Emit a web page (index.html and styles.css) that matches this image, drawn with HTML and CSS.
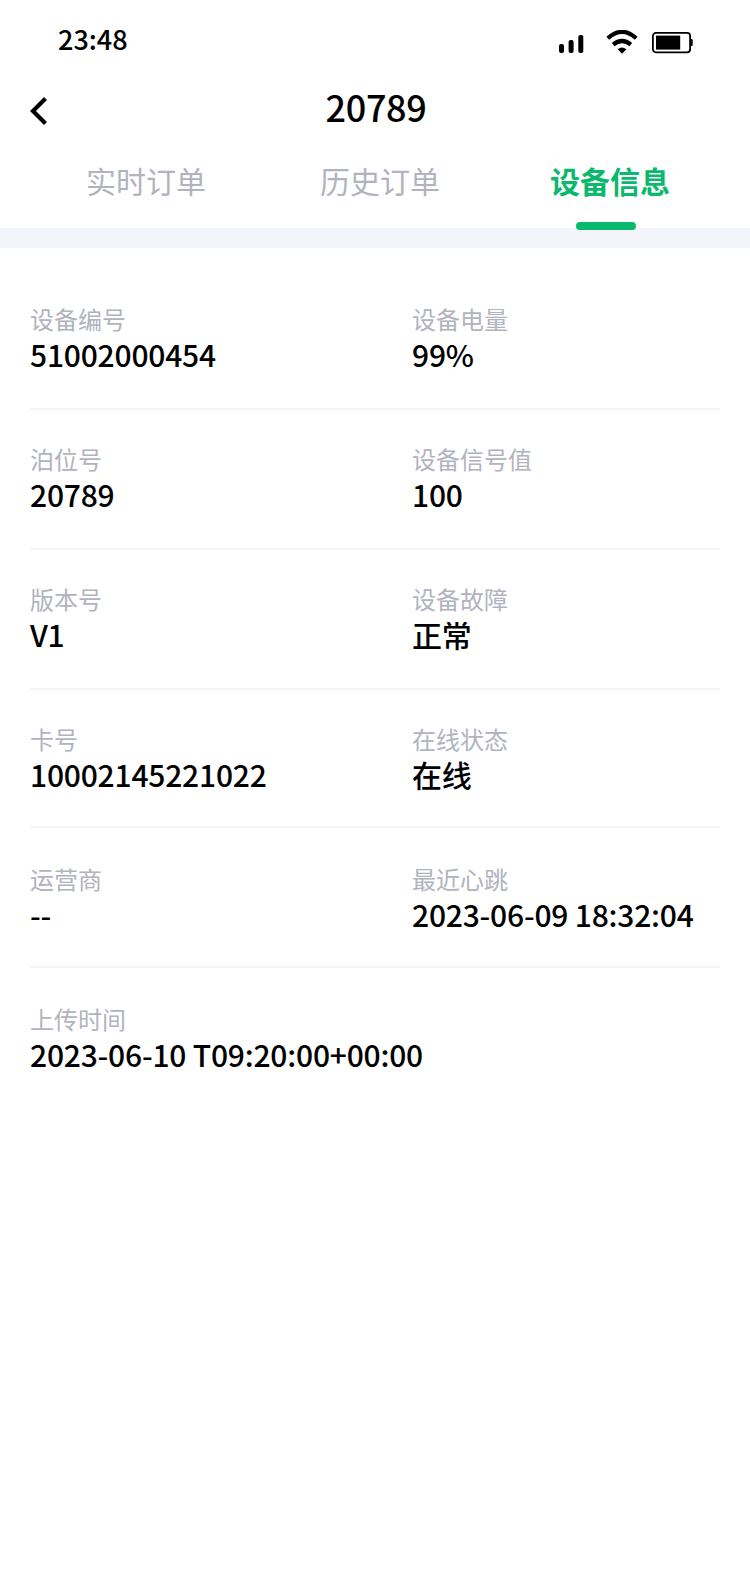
FILE: index.html
```html
<!DOCTYPE html>
<html lang="zh-CN">
<head>
  <meta charset="UTF-8">
  <meta name="viewport" content="width=device-width, initial-scale=1.0">
  <title>设备信息</title>
  <link rel="stylesheet" href="styles.css">
</head>
<body>
  <div class="status-bar">
    <span class="time">23:48</span>
    <div class="status-icons">
      <svg class="signal" width="25" height="18" viewBox="0 0 25 18">
        <rect x="0" y="9" width="5" height="9" rx="2"/>
        <rect x="9.6" y="5" width="5" height="13" rx="2"/>
        <rect x="19.3" y="0" width="5" height="18" rx="2"/>
      </svg>
      <svg class="wifi" width="32" height="24" viewBox="0 0 32 24">
        <path d="M1.8 8.2 Q16 -4.4 30.2 8.2" fill="none" stroke="#000" stroke-width="4.2"/>
        <path d="M7.2 14.6 Q16 7.4 24.8 14.6" fill="none" stroke="#000" stroke-width="4.4"/>
        <path d="M11.6 19.2 Q16 16 20.4 19.2 L16 23.8 Z"/>
      </svg>
      <svg class="battery" width="41" height="22" viewBox="0 0 41 22">
        <rect x="0.9" y="0.9" width="37.2" height="19.4" rx="3" fill="none" stroke="#000" stroke-width="1.8"/>
        <rect x="4" y="3.6" width="24.2" height="14"/>
        <path d="M38.5 7 h1 q1.2 0 1.2 1.2 v4.6 q0 1.2 -1.2 1.2 h-1 z"/>
      </svg>
    </div>
  </div>

  <div class="nav">
    <svg class="back" width="20" height="30" viewBox="0 0 20 30">
      <path d="M16.5 2.5 L4 15 L16.5 27.5" fill="none" stroke="#000" stroke-width="4.2"/>
    </svg>
    <h1>20789</h1>
  </div>

  <div class="tabs">
    <div class="tab">实时订单</div>
    <div class="tab">历史订单</div>
    <div class="tab active">设备信息</div>
  </div>

  <div class="info">
    <div class="row">
      <div class="item">
        <p class="label">设备编号</p>
        <p class="value">51002000454</p>
      </div>
      <div class="item">
        <p class="label">设备电量</p>
        <p class="value">99%</p>
      </div>
    </div>
    <div class="row">
      <div class="item">
        <p class="label">泊位号</p>
        <p class="value">20789</p>
      </div>
      <div class="item">
        <p class="label">设备信号值</p>
        <p class="value">100</p>
      </div>
    </div>
    <div class="row">
      <div class="item">
        <p class="label">版本号</p>
        <p class="value">V1</p>
      </div>
      <div class="item">
        <p class="label">设备故障</p>
        <p class="value">正常</p>
      </div>
    </div>
    <div class="row short">
      <div class="item">
        <p class="label">卡号</p>
        <p class="value">10002145221022</p>
      </div>
      <div class="item">
        <p class="label">在线状态</p>
        <p class="value">在线</p>
      </div>
    </div>
    <div class="row low">
      <div class="item">
        <p class="label">运营商</p>
        <p class="value">--</p>
      </div>
      <div class="item">
        <p class="label">最近心跳</p>
        <p class="value">2023-06-09 18:32:04</p>
      </div>
    </div>
    <div class="row low last">
      <div class="item">
        <p class="label">上传时间</p>
        <p class="value">2023-06-10 T09:20:00+00:00</p>
      </div>
    </div>
  </div>
</body>
</html>
```
FILE: styles.css
```css
* {
  box-sizing: border-box;
}

body {
  margin: 0;
  min-height: 1572px;
  background-color: #fff;
  color: #000;
  font-family: "Noto Sans CJK SC", sans-serif;
}

p,
h1 {
  margin: 0;
}

svg {
  display: block;
}

.status-bar {
  display: flex;
  justify-content: space-between;
  align-items: flex-start;
  height: 80px;
  padding: 20px 57px 0 58px;
}

.time {
  font-size: 27px;
  line-height: 38px;
  font-weight: 500;
}

.status-icons {
  display: flex;
  align-items: flex-start;
}

.signal {
  margin-top: 15px;
}

.wifi {
  margin: 10px 14px 0 22px;
}

.battery {
  margin-top: 12px;
}

.nav {
  display: grid;
  grid-template-columns: 60px 1fr 60px;
  height: 70px;
  padding: 0 28px;
}

.back {
  margin: 16px 0 0 1px;
}

.nav h1 {
  margin-left: 2px;
  text-align: center;
  font-size: 36px;
  line-height: 52px;
  font-weight: 500;
  letter-spacing: -0.3px;
}

.tabs {
  display: grid;
  grid-template-columns: 234px 230px 120px;
  height: 98px;
  padding: 8px 0 0 86px;
  border-bottom: 20px solid #f4f5fa;
}

.tab {
  position: relative;
  font-size: 30px;
  line-height: 44px;
  color: #b1b3be;
  font-weight: 400;
}

.tab.active {
  color: #0ab96d;
  font-weight: 700;
}

.tab.active::after {
  content: "";
  position: absolute;
  left: 26px;
  top: 64px;
  width: 60px;
  height: 8px;
  border-radius: 4px;
  background-color: #08ba6e;
}

.info {
  padding: 22px 30px 0;
}

.row {
  display: grid;
  grid-template-columns: 382px 1fr;
  height: 140px;
  padding-top: 31px;
  border-bottom: 2px solid #f5f5f7;
}

.row.short {
  height: 138px;
}

.row.low {
  padding-top: 33px;
}

.row.last {
  border-bottom: none;
}

.label {
  font-size: 24px;
  line-height: 36px;
  font-weight: 400;
  color: #b1b3be;
}

.value {
  font-size: 30px;
  line-height: 34px;
  font-weight: 500;
  letter-spacing: -0.2px;
  white-space: nowrap;
}
```
